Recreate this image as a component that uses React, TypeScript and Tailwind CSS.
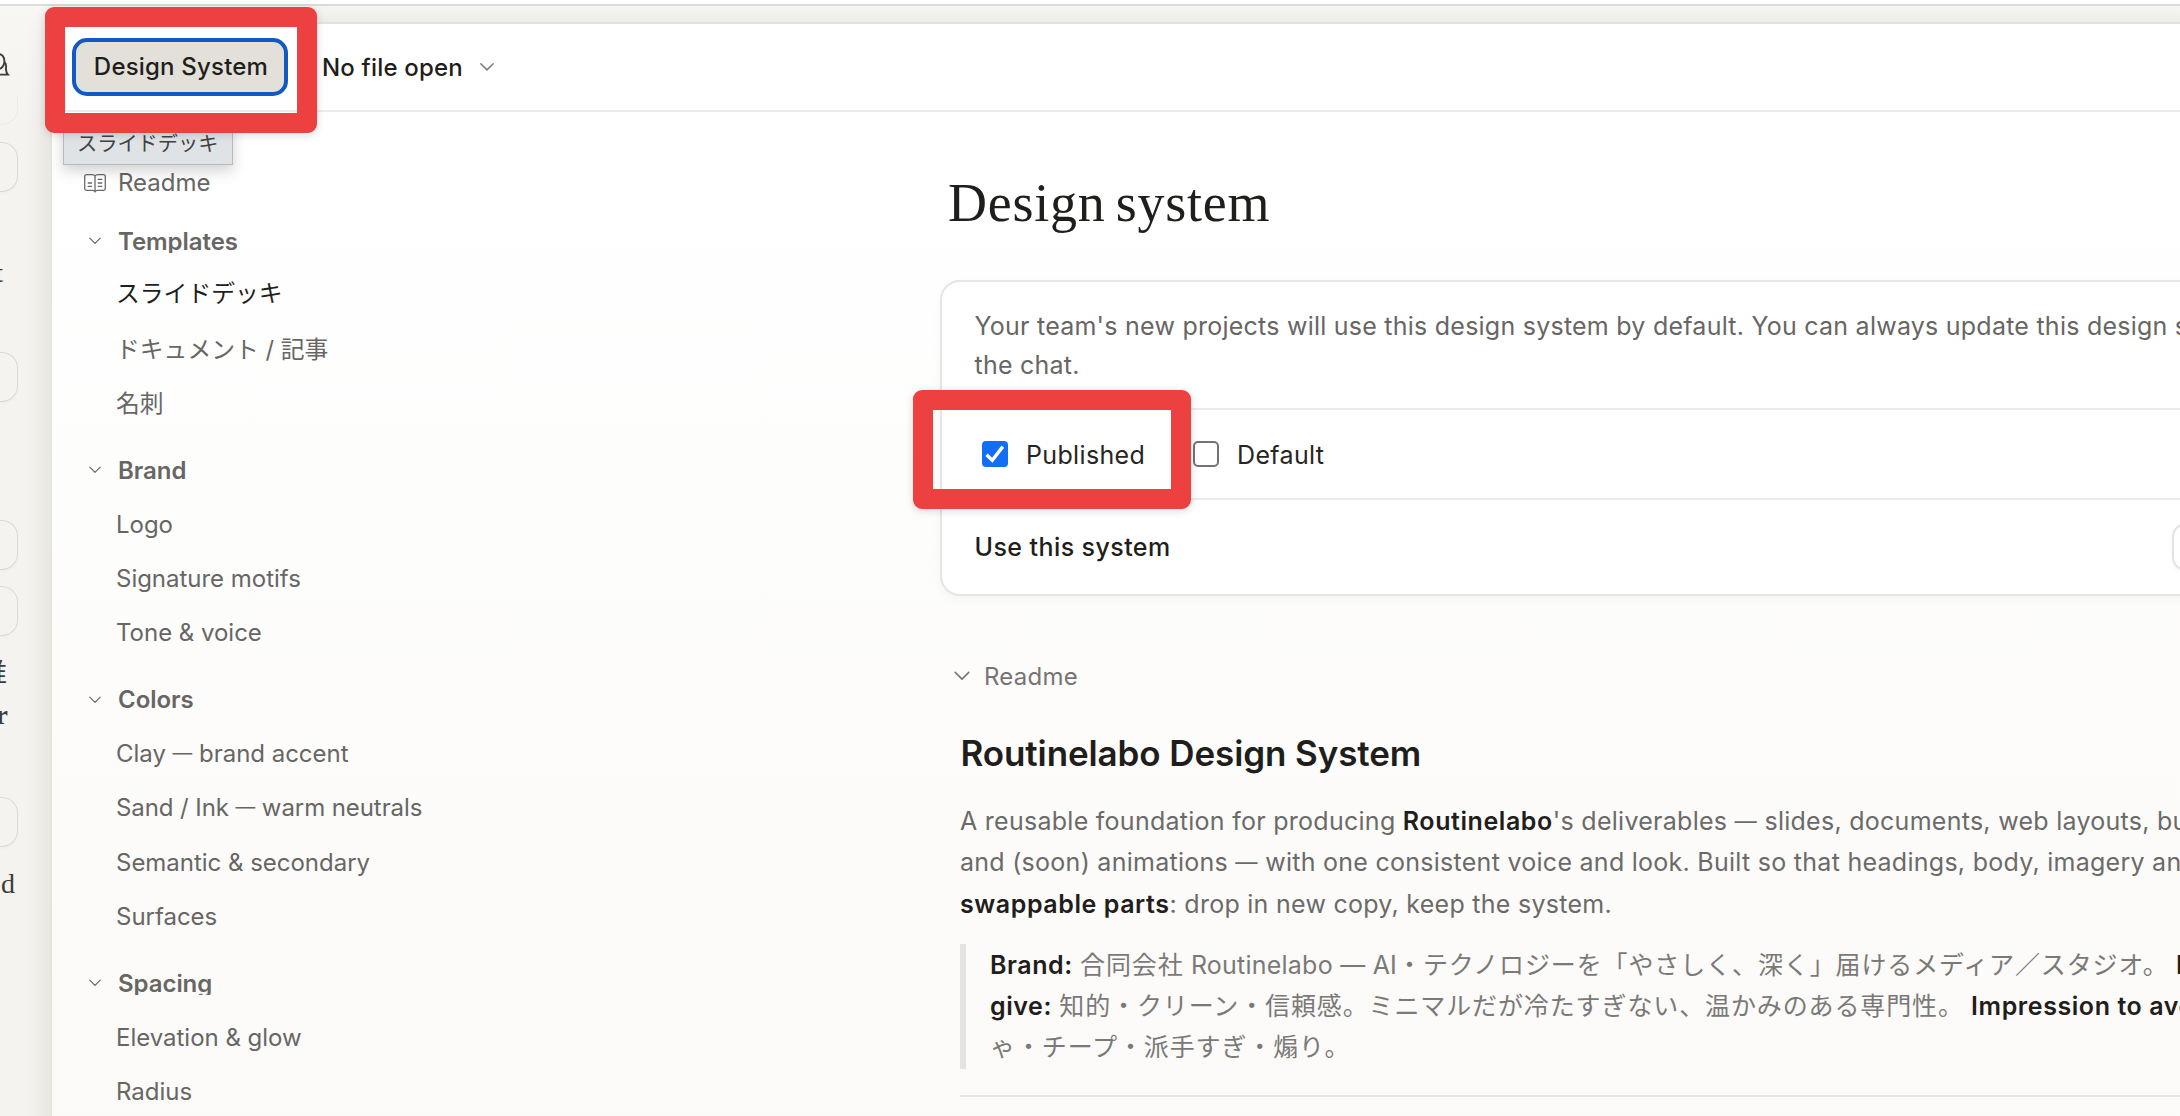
import type { ReactNode } from "react";

const sans = "font-['Inter','Noto_Sans_CJK_JP',sans-serif]";

function Chevron({ className = "" }: { className?: string }) {
  return (
    <svg viewBox="0 0 24 24" fill="none" stroke="currentColor" className={`size-6 shrink-0 ${className}`}>
      <path d="M6.8 9.2 L12 14.4 L17.2 9.2" strokeWidth="1.2" strokeLinecap="round" strokeLinejoin="round" />
    </svg>
  );
}

function BookIcon() {
  return (
    <svg viewBox="0 0 24 24" fill="none" stroke="currentColor" strokeWidth="1.3" strokeLinecap="round" className="size-6 shrink-0 text-[#6b6a68]">
      <path d="M12 5.2 C11.4 4.1 10.6 3.7 9.4 3.7 H3.4 Q1.7 3.7 1.7 5.4 V17.6 Q1.7 19.3 3.4 19.3 H9.6 C10.8 19.3 11.5 19.6 12 20.6 C12.5 19.6 13.2 19.3 14.4 19.3 H20.6 Q22.3 19.3 22.3 17.6 V5.4 Q22.3 3.7 20.6 3.7 H14.6 C13.4 3.7 12.6 4.1 12 5.2 V20.6" />
      <path d="M5.2 12 H8.6 M5.2 15.4 H8.6 M15.2 8.4 H18.8 M15.2 12 H18.8 M15.2 15.4 H18.8" />
    </svg>
  );
}

type Item = { label: ReactNode; active?: boolean; ja?: boolean };

const Dash = () => <span className="inline-block -translate-y-[1.6px] text-[0.82em] leading-none">—</span>;
const WideDash = () => <span className="inline-block -translate-y-[1px] text-[0.89em] leading-none">—</span>;

const groups: { title: string; items: Item[] }[] = [
  {
    title: "Templates",
    items: [
      { label: "スライドデッキ", active: true, ja: true },
      { label: "ドキュメント / 記事", ja: true },
      { label: "名刺", ja: true },
    ],
  },
  { title: "Brand", items: [{ label: "Logo" }, { label: "Signature motifs" }, { label: "Tone & voice" }] },
  {
    title: "Colors",
    items: [
      { label: <>Clay <Dash /> brand accent</> },
      { label: <span className="tracking-[-0.08px]">Sand / Ink <Dash /> warm neutrals</span> },
      { label: "Semantic & secondary" },
      { label: "Surfaces" },
    ],
  },
  { title: "Spacing", items: [{ label: "Elevation & glow" }, { label: "Radius" }] },
];

function Sidebar() {
  return (
    <nav className="w-[888px] shrink-0 pt-[43.9px] text-[24px] text-[#676664]">
      <div className="mb-1 flex h-[54.2px] items-center pl-[31px]">
        <BookIcon />
        <span className="ml-[11px]">Readme</span>
      </div>
      {groups.map((g) => (
        <div key={g.title} className="mb-[12.5px]">
          <div className="flex h-[54.2px] items-center pl-[31px]">
            <Chevron />
            <span className="ml-[11px] h-[23px] overflow-hidden font-semibold leading-[23px] tracking-[-0.05px]">{g.title}</span>
          </div>
          {g.items.map((it, i) => (
            <div
              key={i}
              className={`flex h-[54.2px] items-center whitespace-pre pl-[64px] ${it.active ? "pb-[3px] text-[#1f1e1c]" : ""} ${
                it.ja ? "text-[23.8px]" : "pt-[0.6px] tracking-[-0.02px]"
              }`}
            >
              <span>{it.label}</span>
            </div>
          ))}
        </div>
      ))}
    </nav>
  );
}

function Checkbox({ checked = false }: { checked?: boolean }) {
  return checked ? (
    <span className="flex size-[26px] items-center justify-center rounded-[4px] bg-[#136ef6]">
      <svg viewBox="0 0 26 26" fill="none" stroke="white" strokeWidth="3.4" className="size-[26px]">
        <path d="M4.5 13.8 L10.3 19.2 L20.8 5.6" />
      </svg>
    </span>
  ) : (
    <span className="size-[26px] rounded-[5px] border-2 border-[#737373] bg-white" />
  );
}

function Card() {
  return (
    <section className="h-[316px] w-[1400px] rounded-[20px] border-2 border-[#e5e5e4] bg-white text-[25px] shadow-[0_4px_10px_rgba(0,0,0,0.035)]">
      <p className="h-[128px] whitespace-nowrap border-b-2 border-[#ebebea] pl-[32.5px] pt-[25px] leading-[39px] tracking-[0.24px] text-[#676664]">
        Your team's new projects will use this design system by default. You can always update this design system in
        <br />
        the chat.
      </p>
      <div className="flex h-[90px] items-center border-b-2 border-[#ebebea] pl-10 text-[#262523]">
        <Checkbox checked />
        <span className="ml-[18px] w-[119px] pt-[3px] tracking-[0.35px]">Published</span>
        <span className="ml-[48px] flex items-center">
          <Checkbox />
          <span className="ml-[18px] pt-[3px] tracking-[0.35px]">Default</span>
        </span>
      </div>
      <div className="flex h-[94px] items-center pl-[32.5px] font-medium text-[#1f1e1c]">
        <span className="w-[196px] shrink-0 whitespace-nowrap pt-[2px] tracking-[0.42px]">Use this system</span>
        <span className="ml-[1001px] h-[48px] w-[150px] shrink-0 rounded-[14px] border-2 border-[#e3e3e2] shadow-[0_2px_4px_rgba(0,0,0,0.04)]" />
      </div>
    </section>
  );
}

const B = ({ children }: { children: ReactNode }) => (
  <strong className="font-semibold tracking-[0.57px] text-[#1f1e1c]">{children}</strong>
);
const Ja = ({ children }: { children: ReactNode }) => (
  <span className="tracking-[0.88px]">{children}</span>
);

function Readme() {
  return (
    <article className="w-[1400px] whitespace-nowrap pl-5 text-[25px]">
      <div className="flex h-[40px] items-center text-[24px] text-[#767573]">
        <Chevron className="-ml-[10px] scale-[1.3]" />
        <span className="ml-[10px] pt-[2px] tracking-[0.25px]">Readme</span>
      </div>
      <h2 className="mt-[35px] h-[44px] pl-[0.5px] text-[35px] font-semibold leading-[44px] tracking-[-0.1px] text-[#1f1e1c]">
        Routinelabo Design System
      </h2>
      <p className="mt-[26px] leading-[41.4px] tracking-[0.27px] text-[#6b6a68]">
        A reusable foundation for producing <B>Routinelabo</B>'s deliverables <WideDash /> slides, documents, web
        layouts, business cards
        <br />
        and (soon) animations <WideDash /> with one consistent voice and look. Built so that headings, body, imagery and
        <br />
        <B>swappable parts</B>: drop in new copy, keep the system.
      </p>
      <blockquote className="mt-[19px] h-[125px] border-l-[6px] border-[#e3e3e1] pl-6 pt-[0.4px] leading-[41.4px] tracking-[0.23px] text-[#7a7977]">
        <B>Brand:</B> <Ja>合同会社</Ja> Routinelabo — AI<Ja>・テクノロジーを「やさしく、深く」届けるメディア／スタジオ。</Ja>{" "}
        <B>Impression to</B>
        <br />
        <B>give:</B> <Ja>知的・クリーン・信頼感。ミニマルだが冷たすぎない、温かみのある専門性。</Ja> <B>Impression to avoid:</B>
        <br />
        <Ja>ゃ・チープ・派手すぎ・煽り。</Ja>
      </blockquote>
      <hr className="mt-[26px] border-t-2 border-[#e6e6e4]" />
    </article>
  );
}

function StripBox({ className }: { className: string }) {
  return (
    <div className={`h-[50px] w-[18px] shrink-0 rounded-r-[16px] border border-l-0 border-[#dbdad6] bg-[#f4f3f0] shadow-[0_2px_3px_rgba(0,0,0,0.02)] ${className}`} />
  );
}

function LeftStrip() {
  return (
    <aside className="flex h-full w-[51px] shrink-0 flex-col overflow-hidden font-['Liberation_Serif','Noto_Sans_CJK_JP',serif] text-[28px] leading-[30px] text-[#3d3c39]">
      <svg viewBox="0 0 10 26" fill="none" stroke="#3d3c39" strokeWidth="1.9" className="mt-[45px] h-[26px] w-[10px] shrink-0">
        <path d="M-2 3.2 C2.5 2.8 4.4 6.4 4.4 10 C4.4 13.5 3.2 16.2 0 17.8" />
        <path d="M4.8 11.5 C7 13 5.8 16.8 6 18.6 C6.1 20.6 6.8 22.4 7.9 23.6 H-2" />
      </svg>
      <div className="mt-[18px] h-[30px] w-[18px] shrink-0 rounded-br-[16px] border-b border-r border-[#ecebe8]" />
      <StripBox className="mt-[17px]" />
      <div className="mt-[66px] flex h-[30px] w-[3px] shrink-0 justify-end">t</div>
      <StripBox className="mt-[64px]" />
      <StripBox className="mt-[118px]" />
      <StripBox className="mt-[16px]" />
      <div className="mt-[23px] flex h-[30px] w-[7px] shrink-0 justify-end text-[26px]">推</div>
      <div className="mt-[11px] flex h-[30px] w-[8px] shrink-0 justify-end font-bold">r</div>
      <StripBox className="mt-[67px]" />
      <div className="mt-[22px] flex h-[30px] w-[15px] shrink-0 justify-end">d</div>
    </aside>
  );
}

export default function App() {
  return (
    <div className={`relative flex h-[1116px] w-[2180px] flex-col overflow-hidden bg-[#f4f3ef] ${sans}`}>
      <div className="h-[6px] shrink-0 border-b-2 border-[#dcdcdb] bg-white" />
      <div className="flex min-h-0 flex-1 bg-linear-to-b from-[#f8f7f3] to-[#f4f3ef] to-[120px]">
        <LeftStrip />
        <div className="mt-[16px] flex h-[1120px] w-[2200px] shrink-0 flex-col border-l border-t-2 border-[#e2e2de] bg-linear-to-b from-white from-10% to-[#fbfaf8] shadow-[0_4px_24px_4px_rgba(20,30,15,0.09)]">
          <header className="flex h-[88px] shrink-0 items-center border-b-2 border-[#ebebea] bg-white pl-5 text-[24px] font-medium text-[#1f1e1c]">
            <button className="flex h-[58px] w-[216px] items-center justify-center rounded-[15px] border-4 border-[#1159c4] bg-[#e3e0d9] pl-[2px] font-medium tracking-[0.2px]">
              Design System
            </button>
            <span className="ml-[34px] w-[142px] pt-px tracking-[0.18px]">No file open</span>
            <Chevron className="ml-[11px] scale-[1.2] text-[#7b7a78]" />
          </header>
          <div className="flex min-h-0 flex-1">
            <Sidebar />
            <main className="w-[1400px] shrink-0">
              <h1 className="ml-[8px] mt-[61px] h-[60px] font-['Liberation_Serif',serif] text-[54px] leading-[60px] tracking-[0.75px] text-[#1f1e1c] [word-spacing:-4px]">
                Design system
              </h1>
              <div className="mt-[47px]">
                <Card />
              </div>
              <div className="mt-[60px]">
                <Readme />
              </div>
            </main>
          </div>
        </div>
      </div>

      <div className="absolute left-[63px] top-[122px] flex h-[43px] w-[170px] items-center border border-[#b8babc] bg-[#dfe3e6] pl-[13px] pt-[2px] text-[20.2px] text-[#3f4143] shadow-[0_6px_14px_rgba(0,0,0,0.18)]">
        スライドデッキ
      </div>
      <div className="absolute left-[45px] top-[7px] h-[126px] w-[272px] rounded-[9px] shadow-[0_2px_8px_rgba(0,0,0,0.15)] [clip-path:polygon(evenodd,-20px_-20px,292px_-20px,292px_146px,-20px_146px,-20px_-20px,20px_20px,20px_106px,252px_106px,252px_20px,20px_20px)]">
        <div className="h-full rounded-[9px] border-[20px] border-[#ed4040]" />
      </div>
      <div className="absolute left-[913px] top-[390px] h-[119px] w-[278px] rounded-[9px] shadow-[0_2px_8px_rgba(0,0,0,0.15)] [clip-path:polygon(evenodd,-20px_-20px,298px_-20px,298px_139px,-20px_139px,-20px_-20px,20px_20px,20px_99px,258px_99px,258px_20px,20px_20px)]">
        <div className="h-full rounded-[9px] border-[20px] border-[#ed4040]" />
      </div>
    </div>
  );
}
